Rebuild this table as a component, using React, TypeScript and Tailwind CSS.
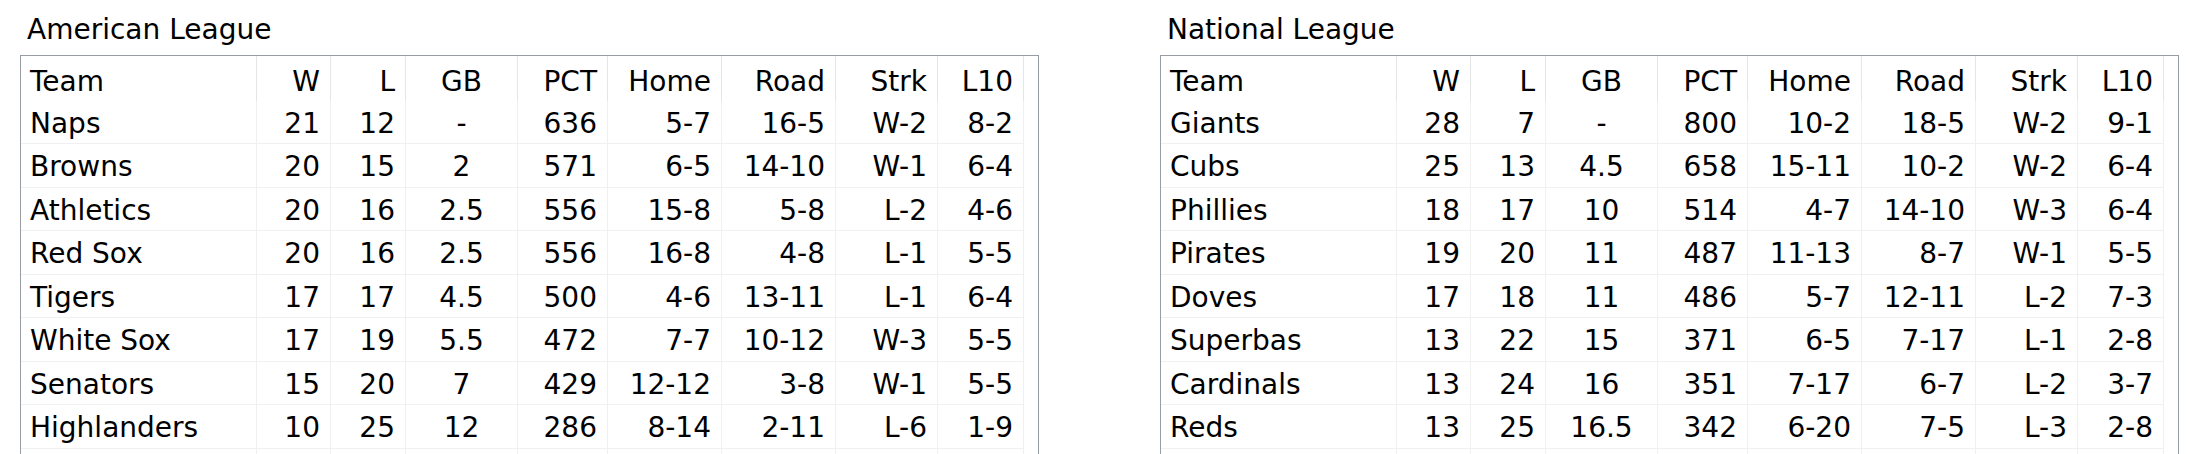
type Row = [string, string, string, string, string, string, string, string, string]

const columns = ["Team", "W", "L", "GB", "PCT", "Home", "Road", "Strk", "L10"]

const american: Row[] = [
  ["Naps", "21", "12", "-", "636", "5-7", "16-5", "W-2", "8-2"],
  ["Browns", "20", "15", "2", "571", "6-5", "14-10", "W-1", "6-4"],
  ["Athletics", "20", "16", "2.5", "556", "15-8", "5-8", "L-2", "4-6"],
  ["Red Sox", "20", "16", "2.5", "556", "16-8", "4-8", "L-1", "5-5"],
  ["Tigers", "17", "17", "4.5", "500", "4-6", "13-11", "L-1", "6-4"],
  ["White Sox", "17", "19", "5.5", "472", "7-7", "10-12", "W-3", "5-5"],
  ["Senators", "15", "20", "7", "429", "12-12", "3-8", "W-1", "5-5"],
  ["Highlanders", "10", "25", "12", "286", "8-14", "2-11", "L-6", "1-9"],
]

const national: Row[] = [
  ["Giants", "28", "7", "-", "800", "10-2", "18-5", "W-2", "9-1"],
  ["Cubs", "25", "13", "4.5", "658", "15-11", "10-2", "W-2", "6-4"],
  ["Phillies", "18", "17", "10", "514", "4-7", "14-10", "W-3", "6-4"],
  ["Pirates", "19", "20", "11", "487", "11-13", "8-7", "W-1", "5-5"],
  ["Doves", "17", "18", "11", "486", "5-7", "12-11", "L-2", "7-3"],
  ["Superbas", "13", "22", "15", "371", "6-5", "7-17", "L-1", "2-8"],
  ["Cardinals", "13", "24", "16", "351", "7-17", "6-7", "L-2", "3-7"],
  ["Reds", "13", "25", "16.5", "342", "6-20", "7-5", "L-3", "2-8"],
]

const grid = "grid grid-cols-[236px_74px_75px_112px_90px_114px_114px_102px_86px_1fr]"

// alignment per column: team left, games back centred, rest right
const align = (i: number) =>
  i === 0 ? "justify-start pl-[9px]" : i === 3 ? "justify-center" : "justify-end pr-[10px]"

function Standings({ title, rows }: { title: string; rows: Row[] }) {
  const blank: Row = ["", "", "", "", "", "", "", "", ""]

  return (
    <section className="flex w-[1019px] flex-col">
      <h2 className="h-[55px] shrink-0 pl-[7px] pt-[16px] text-[28px] leading-[28px]">{title}</h2>
      <div className="flex-1 overflow-hidden border border-b-0 border-[#989ca4]">
        <div className={`${grid} h-[44.5px]`}>
          {columns.map((c, i) => (
            <div key={c} className={`flex items-center border-r border-[#e5e5e5] pt-[8px] ${align(i)}`}>
              {c}
            </div>
          ))}
          <div />
        </div>
        {[...rows, blank].map((r, ri) => (
          <div key={ri} className={`${grid} h-[43.5px]`}>
            {r.map((v, i) => (
              <div
                key={i}
                className={`flex items-center border-r border-b border-[#f0f0f0] pt-[4px] ${align(i)}`}
              >
                {v}
              </div>
            ))}
            <div />
          </div>
        ))}
      </div>
    </section>
  )
}

export default function App() {
  return (
    <div className="flex h-[454px] gap-[121px] overflow-hidden bg-white pl-[20px] font-['DejaVu_Sans',sans-serif] text-[28px] leading-[28px] text-black">
      <Standings title="American League" rows={american} />
      <Standings title="National League" rows={national} />
    </div>
  )
}
